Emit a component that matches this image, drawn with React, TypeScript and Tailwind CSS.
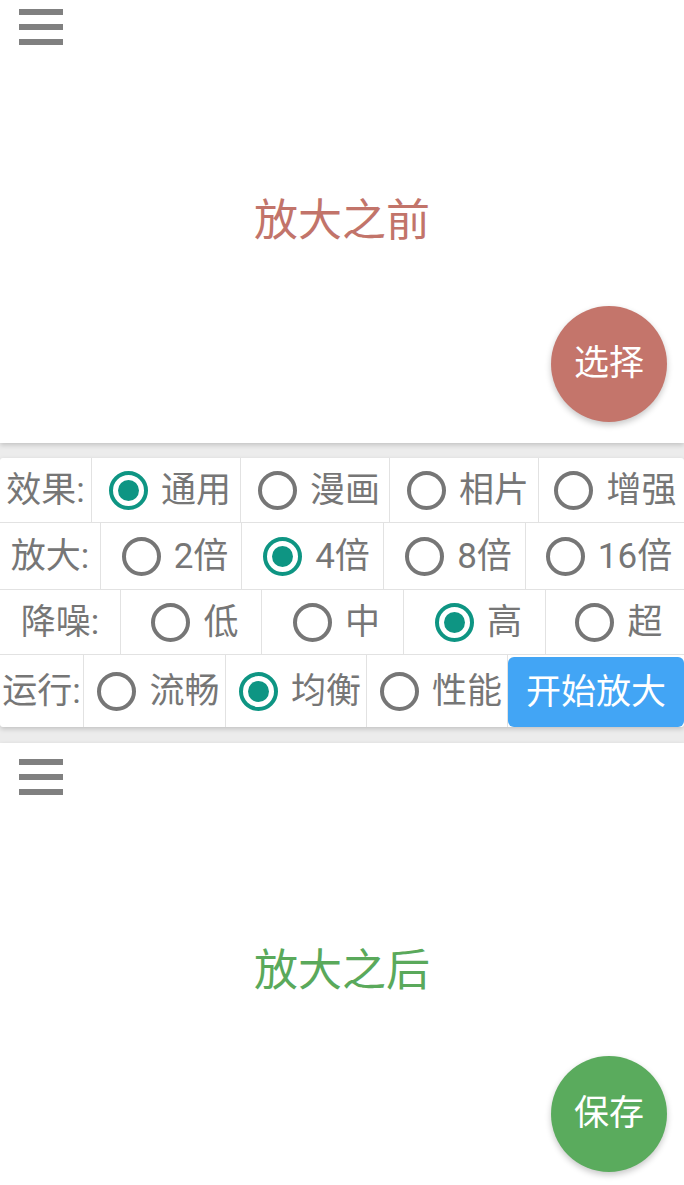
import React from 'react'

const FONT = '"Roboto", "Noto Sans CJK SC", sans-serif'

function Menu() {
  return (
    <div className="flex flex-col gap-[9px] w-[44px] ml-[19px] pt-[16px]">
      <div className="h-[6px] bg-[#808080]" />
      <div className="h-[6px] bg-[#808080]" />
      <div className="h-[6px] bg-[#808080]" />
    </div>
  )
}

function Panel({ title, color, fab, className = '' }: { title: string; color: string; fab: string; className?: string }) {
  return (
    <div className={`relative h-[450px] bg-white shadow-[0_2px_5px_rgba(0,0,0,0.18)] flex flex-col ${className}`}>
      <Menu />
      <div className="flex-1 flex items-center justify-center -mt-[46px]">
        <span className={`text-[44px] leading-none ${color}`}>{title}</span>
      </div>
      <button
        className={`absolute right-[17px] bottom-[21px] w-[116px] h-[116px] rounded-full text-white text-[35px] flex items-center justify-center shadow-[0_3px_6px_rgba(0,0,0,0.22)] ${fab}`}
      >
        {title === '放大之前' ? '选择' : '保存'}
      </button>
    </div>
  )
}

function Radio({ checked }: { checked?: boolean }) {
  return (
    <span
      className={`w-[39px] h-[39px] rounded-full border-[4px] flex items-center justify-center shrink-0 ${
        checked ? 'border-[#0e9583]' : 'border-[#767676]'
      }`}
    >
      {checked && <span className="w-[21px] h-[21px] rounded-full bg-[#0e9583]" />}
    </span>
  )
}

type Row = { label: string; widths: string[]; opts: string[]; sel: number; h: string }

const rows: Row[] = [
  { label: '效果:', widths: ['w-[92px]', 'w-[149px]', 'w-[149px]', 'w-[149px]'], opts: ['通用', '漫画', '相片', '增强'], sel: 0, h: 'h-[65px]' },
  { label: '放大:', widths: ['w-[101px]', 'w-[141px]', 'w-[142px]', 'w-[142px]'], opts: ['2倍', '4倍', '8倍', '16倍'], sel: 1, h: 'h-[67px]' },
  { label: '降噪:', widths: ['w-[121px]', 'w-[141px]', 'w-[142px]', 'w-[142px]'], opts: ['低', '中', '高', '超'], sel: 2, h: 'h-[65px]' },
]

function Option({ text, checked, className }: { text: string; checked?: boolean; className: string }) {
  return (
    <div className={`flex items-center justify-center gap-[13px] pl-[8px] border-r border-[#e2e2e2] ${className}`}>
      <Radio checked={checked} />
      <span className="whitespace-nowrap">{text}</span>
    </div>
  )
}

export default function App() {
  return (
    <div className="min-h-[1185px] bg-[#ececec] overflow-hidden text-[#767676]" style={{ fontFamily: FONT }}>
      <Panel title="放大之前" color="text-[#c2746a]" fab="bg-[#c4756b]" className="-mt-[7px]" />

      <div className="mt-[15px] bg-white rounded-[3px] shadow-[0_2px_5px_rgba(0,0,0,0.18)] text-[35px] leading-none">
        {rows.map((r) => (
          <div key={r.label} className={`flex border-b border-[#e2e2e2] ${r.h}`}>
            <div className={`flex items-center justify-center border-r border-[#e2e2e2] ${r.widths[0]}`}>{r.label}</div>
            {r.opts.map((o, i) => (
              <Option
                key={o}
                text={o}
                checked={i === r.sel}
                className={i < 3 ? r.widths[i + 1] : 'flex-1 border-r-0'}
              />
            ))}
          </div>
        ))}
        <div className="flex h-[72px]">
          <div className="flex items-center justify-center border-r border-[#e2e2e2] w-[84px]">运行:</div>
          <Option text="流畅" className="w-[142px]" />
          <Option text="均衡" checked className="w-[141px]" />
          <Option text="性能" className="w-[141px]" />
          <button className="flex-1 self-end h-[70px] rounded-[6px] bg-[#42a5f5] text-white text-[35px] flex items-center justify-center">
            开始放大
          </button>
        </div>
      </div>

      <Panel title="放大之后" color="text-[#5aa95b]" fab="bg-[#5aab5d]" className="mt-[16px]" />
    </div>
  )
}
